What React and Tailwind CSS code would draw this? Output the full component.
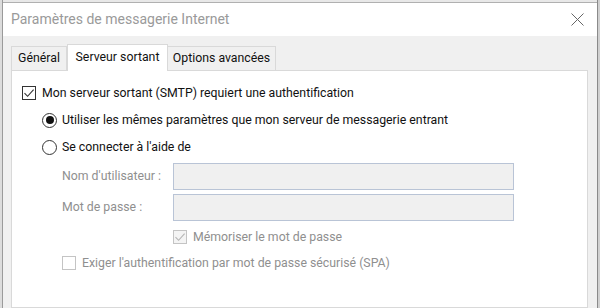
const font = { fontFamily: 'Roboto, "Noto Sans", sans-serif' };

const Check = ({ disabled }) => (
  <span
    className={`flex items-center justify-center w-[14px] h-[14px] border shrink-0 ${
      disabled ? "border-[#c4c4c4] bg-[#f4f4f4]" : "border-[#333] bg-white"
    }`}
  >
    <svg width="12" height="12" viewBox="0 0 12 12">
      <path
        d="M1.5 6.2 L4.6 9.3 L10.6 2.6"
        fill="none"
        stroke={disabled ? "#b5b5b5" : "#333"}
        strokeWidth="1.1"
      />
    </svg>
  </span>
);

const Box = () => (
  <span className="w-[14px] h-[14px] border border-[#c4c4c4] bg-white shrink-0" />
);

const Radio = ({ on }) => (
  <span className="flex items-center justify-center w-[15px] h-[15px] rounded-full border border-[#333] bg-white shrink-0">
    {on && <span className="w-[8px] h-[8px] rounded-full bg-[#111]" />}
  </span>
);

const Field = ({ label }) => (
  <div className="flex items-center h-[27px] ml-10">
    <span className="w-[111px] whitespace-nowrap text-[#8f8f8f]">{label}</span>
    <div className="w-[341px] h-[27px] border border-[#b9c4d6] bg-[#f0f0f0]" />
  </div>
);

export default function App() {
  return (
    <div className="w-[600px] h-[308px] flex overflow-hidden bg-[#e8e8e8] whitespace-nowrap" style={font}>
      <div className="w-[3px] flex flex-col bg-[#dcdcdc] border-r border-[#9a9a9a]" />
      <div className="flex-1 mt-[2px] flex flex-col bg-[#f0f0f0] border-t border-[#b0b0b0]">
        <div className="h-[33px] bg-white flex items-center justify-between pl-2 pr-[13px]">
          <span className="text-[14px] text-[#9a9a9a]">Paramètres de messagerie Internet</span>
          <svg width="13" height="13" viewBox="0 0 13 13">
            <path d="M0.5 0.5 L12.5 12.5 M12.5 0.5 L0.5 12.5" stroke="#666" strokeWidth="1" />
          </svg>
        </div>
        <div className="flex-1 flex flex-col pl-2 pr-[9px] pt-2">
          <div className="flex items-end text-[12.3px] text-[#111]">
            <div className="w-[56px] h-[24px] border border-b-0 border-[#d9d9d9] flex items-center justify-center">
              Général
            </div>
            <div className="w-[101px] h-[27px] -mb-px bg-white border border-b-0 border-[#d9d9d9] flex items-start pt-[3px] justify-center relative z-10">
              Serveur sortant
            </div>
            <div className="w-[108px] h-[24px] border border-b-0 border-l-0 border-[#d9d9d9] flex items-center justify-center">
              Options avancées
            </div>
          </div>
          <div className="flex-1 bg-white border border-[#d9d9d9] pt-3 pl-[10px] text-[12.3px] text-[#111]">
            <div className="flex items-center h-[20px] gap-[6px]">
              <Check />
              <span>Mon serveur sortant (SMTP) requiert une authentification</span>
            </div>
            <div className="flex items-center h-[20px] gap-[5px] ml-5 mt-[7px]">
              <Radio on />
              <span>Utiliser les mêmes paramètres que mon serveur de messagerie entrant</span>
            </div>
            <div className="flex items-center h-[20px] gap-[5px] ml-5 mt-[7px]">
              <Radio />
              <span>Se connecter à l'aide de</span>
            </div>
            <div className="mt-[6px] flex flex-col gap-[4px]">
              <Field label="Nom d'utilisateur :" />
              <Field label="Mot de passe :" />
            </div>
            <div className="flex items-center h-[20px] gap-[6px] ml-[151px] mt-[6px] text-[#8f8f8f]">
              <Check disabled />
              <span>Mémoriser le mot de passe</span>
            </div>
            <div className="flex items-center h-[20px] gap-[6px] ml-10 mt-[6px] text-[#8f8f8f]">
              <Box />
              <span>Exiger l'authentification par mot de passe sécurisé (SPA)</span>
            </div>
          </div>
        </div>
      </div>
      <div className="w-[3px] bg-[#d0d0d0] border-l border-[#8a8a8a]" />
    </div>
  );
}
